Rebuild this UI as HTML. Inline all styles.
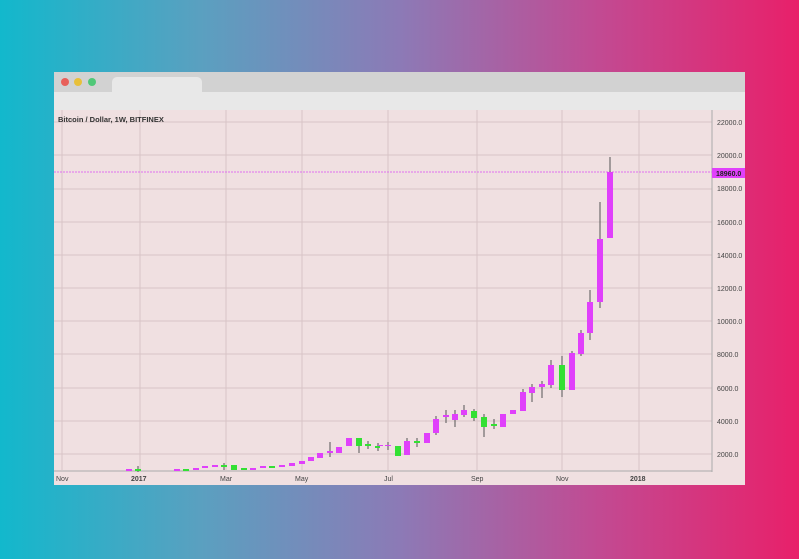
<!DOCTYPE html>
<html><head><meta charset="utf-8"><style>
html,body{margin:0;padding:0;width:799px;height:559px;overflow:hidden}
body{background:linear-gradient(90deg,#12b8cc 0%,#5aa0c0 25%,#8c7ab6 50%,#c24a92 75%,#e8206a 100%);font-family:"Liberation Sans",sans-serif}
.win{position:absolute;left:54px;top:72px;width:691px;height:413px;background:#f0e0e1}
.top{position:absolute;left:0;top:0;width:691px;height:20px;background:#d2d2d2}
.tab{position:absolute;left:58px;top:5px;width:90px;height:16px;background:#e8e8e8;border-radius:5px 5px 0 0}
.bar{position:absolute;left:0;top:20px;width:691px;height:18px;background:#e8e8e8}
.dot{position:absolute;top:6px;width:8px;height:8px;border-radius:50%}
</style></head><body>
<div class="win">
<div class="top"></div><div class="tab"></div><div class="bar"></div>
<div class="dot" style="left:7px;background:#e8605a"></div>
<div class="dot" style="left:20px;background:#e8c03a"></div>
<div class="dot" style="left:34px;background:#50c878"></div>
</div>
<svg width="799" height="559" style="position:absolute;left:0;top:0" font-family="Liberation Sans, sans-serif">
<g stroke="#d8c4c6" stroke-width="1">
<line x1="62" y1="110" x2="62" y2="470"/><line x1="140" y1="110" x2="140" y2="470"/><line x1="226" y1="110" x2="226" y2="470"/><line x1="302" y1="110" x2="302" y2="470"/><line x1="388" y1="110" x2="388" y2="470"/><line x1="477" y1="110" x2="477" y2="470"/><line x1="562" y1="110" x2="562" y2="470"/><line x1="639" y1="110" x2="639" y2="470"/>
<line x1="54" y1="122" x2="712" y2="122"/><line x1="54" y1="155" x2="712" y2="155"/><line x1="54" y1="189" x2="712" y2="189"/><line x1="54" y1="222" x2="712" y2="222"/><line x1="54" y1="255" x2="712" y2="255"/><line x1="54" y1="288" x2="712" y2="288"/><line x1="54" y1="321" x2="712" y2="321"/><line x1="54" y1="354" x2="712" y2="354"/><line x1="54" y1="388" x2="712" y2="388"/><line x1="54" y1="421" x2="712" y2="421"/><line x1="54" y1="454" x2="712" y2="454"/>
</g>
<line x1="712" y1="110" x2="712" y2="472" stroke="#aaa"/>
<line x1="54" y1="471" x2="712" y2="471" stroke="#aaa"/>
<line x1="54" y1="172" x2="712" y2="172" stroke="#e070f0" stroke-dasharray="2,1"/>
<text x="58" y="122" font-size="7.5" fill="#333" font-weight="bold">Bitcoin / Dollar, 1W, BITFINEX</text>
<g font-size="7" fill="#444">
<text x="717" y="125">22000.0</text><text x="717" y="158">20000.0</text><text x="717" y="191">18000.0</text><text x="717" y="225">16000.0</text><text x="717" y="258">14000.0</text><text x="717" y="291">12000.0</text><text x="717" y="324">10000.0</text><text x="717" y="357">8000.0</text><text x="717" y="391">6000.0</text><text x="717" y="424">4000.0</text><text x="717" y="457">2000.0</text>
<text x="56" y="481">Nov</text><text x="131" y="481" font-weight="bold">2017</text><text x="220" y="481">Mar</text><text x="295" y="481">May</text><text x="384" y="481">Jul</text><text x="471" y="481">Sep</text><text x="556" y="481">Nov</text><text x="630" y="481" font-weight="bold">2018</text>
</g>
<rect x="712" y="168" width="33" height="10" fill="#e040fb"/>
<text x="716" y="176" font-size="7" fill="#222" font-weight="bold">18960.0</text>
<g stroke="#555" stroke-width="1">
<line x1="330" y1="442" x2="330" y2="457"/><line x1="359" y1="438" x2="359" y2="453"/><line x1="368" y1="441" x2="368" y2="449"/><line x1="378" y1="443" x2="378" y2="451"/><line x1="388" y1="442" x2="388" y2="450"/><line x1="407" y1="438" x2="407" y2="455"/><line x1="417" y1="438" x2="417" y2="447"/><line x1="436" y1="416" x2="436" y2="435"/><line x1="446" y1="410" x2="446" y2="423"/><line x1="455" y1="410" x2="455" y2="427"/><line x1="464" y1="405" x2="464" y2="417"/><line x1="474" y1="409" x2="474" y2="421"/><line x1="484" y1="414" x2="484" y2="437"/><line x1="494" y1="419" x2="494" y2="429"/><line x1="523" y1="389" x2="523" y2="411"/><line x1="532" y1="384" x2="532" y2="402"/><line x1="542" y1="381" x2="542" y2="398"/><line x1="551" y1="360" x2="551" y2="388"/><line x1="562" y1="356" x2="562" y2="397"/><line x1="572" y1="351" x2="572" y2="390"/><line x1="581" y1="330" x2="581" y2="356"/><line x1="590" y1="290" x2="590" y2="340"/><line x1="600" y1="202" x2="600" y2="308"/><line x1="610" y1="157" x2="610" y2="238"/>
<line x1="138" y1="466" x2="138" y2="472"/><line x1="224" y1="463" x2="224" y2="470"/>
</g>
<g fill="#e040fb">
<rect x="126" y="469" width="6" height="2"/><rect x="174" y="469" width="6" height="2"/><rect x="193" y="468" width="6" height="2"/><rect x="202" y="466" width="6" height="2"/><rect x="212" y="465" width="6" height="2"/><rect x="250" y="468" width="6" height="2"/><rect x="260" y="466" width="6" height="2"/><rect x="279" y="465" width="6" height="2"/><rect x="289" y="463" width="6" height="3"/><rect x="299" y="461" width="6" height="3"/><rect x="308" y="457" width="6" height="4"/><rect x="317" y="453" width="6" height="5"/><rect x="327" y="451" width="6" height="2"/><rect x="336" y="447" width="6" height="6"/><rect x="346" y="438" width="6" height="8"/><rect x="404" y="441" width="6" height="14"/><rect x="424" y="433" width="6" height="10"/><rect x="433" y="419" width="6" height="14"/><rect x="443" y="415" width="6" height="2"/><rect x="452" y="414" width="6" height="6"/><rect x="461" y="410" width="6" height="5"/><rect x="500" y="414" width="6" height="13"/><rect x="510" y="410" width="6" height="4"/><rect x="520" y="392" width="6" height="19"/><rect x="529" y="387" width="6" height="6"/><rect x="539" y="384" width="6" height="3"/><rect x="548" y="365" width="6" height="20"/><rect x="569" y="353" width="6" height="37"/><rect x="578" y="333" width="6" height="21"/><rect x="587" y="302" width="6" height="31"/><rect x="597" y="239" width="6" height="63"/><rect x="607" y="172" width="6" height="66"/>
<rect x="378" y="445" width="5" height="1"/><rect x="385" y="445" width="6" height="1"/>
</g>
<g fill="#33e033">
<rect x="135" y="469" width="6" height="2"/><rect x="183" y="469" width="6" height="2"/><rect x="221" y="465" width="6" height="2"/><rect x="231" y="465" width="6" height="5"/><rect x="241" y="468" width="6" height="2"/><rect x="269" y="466" width="6" height="2"/><rect x="356" y="438" width="6" height="8"/><rect x="365" y="444" width="6" height="2"/><rect x="375" y="446" width="5" height="2"/><rect x="395" y="446" width="6" height="10"/><rect x="414" y="441" width="6" height="2"/><rect x="471" y="411" width="6" height="7"/><rect x="481" y="417" width="6" height="10"/><rect x="491" y="424" width="6" height="2"/><rect x="559" y="365" width="6" height="25"/>
</g>
</svg>
</body></html>
